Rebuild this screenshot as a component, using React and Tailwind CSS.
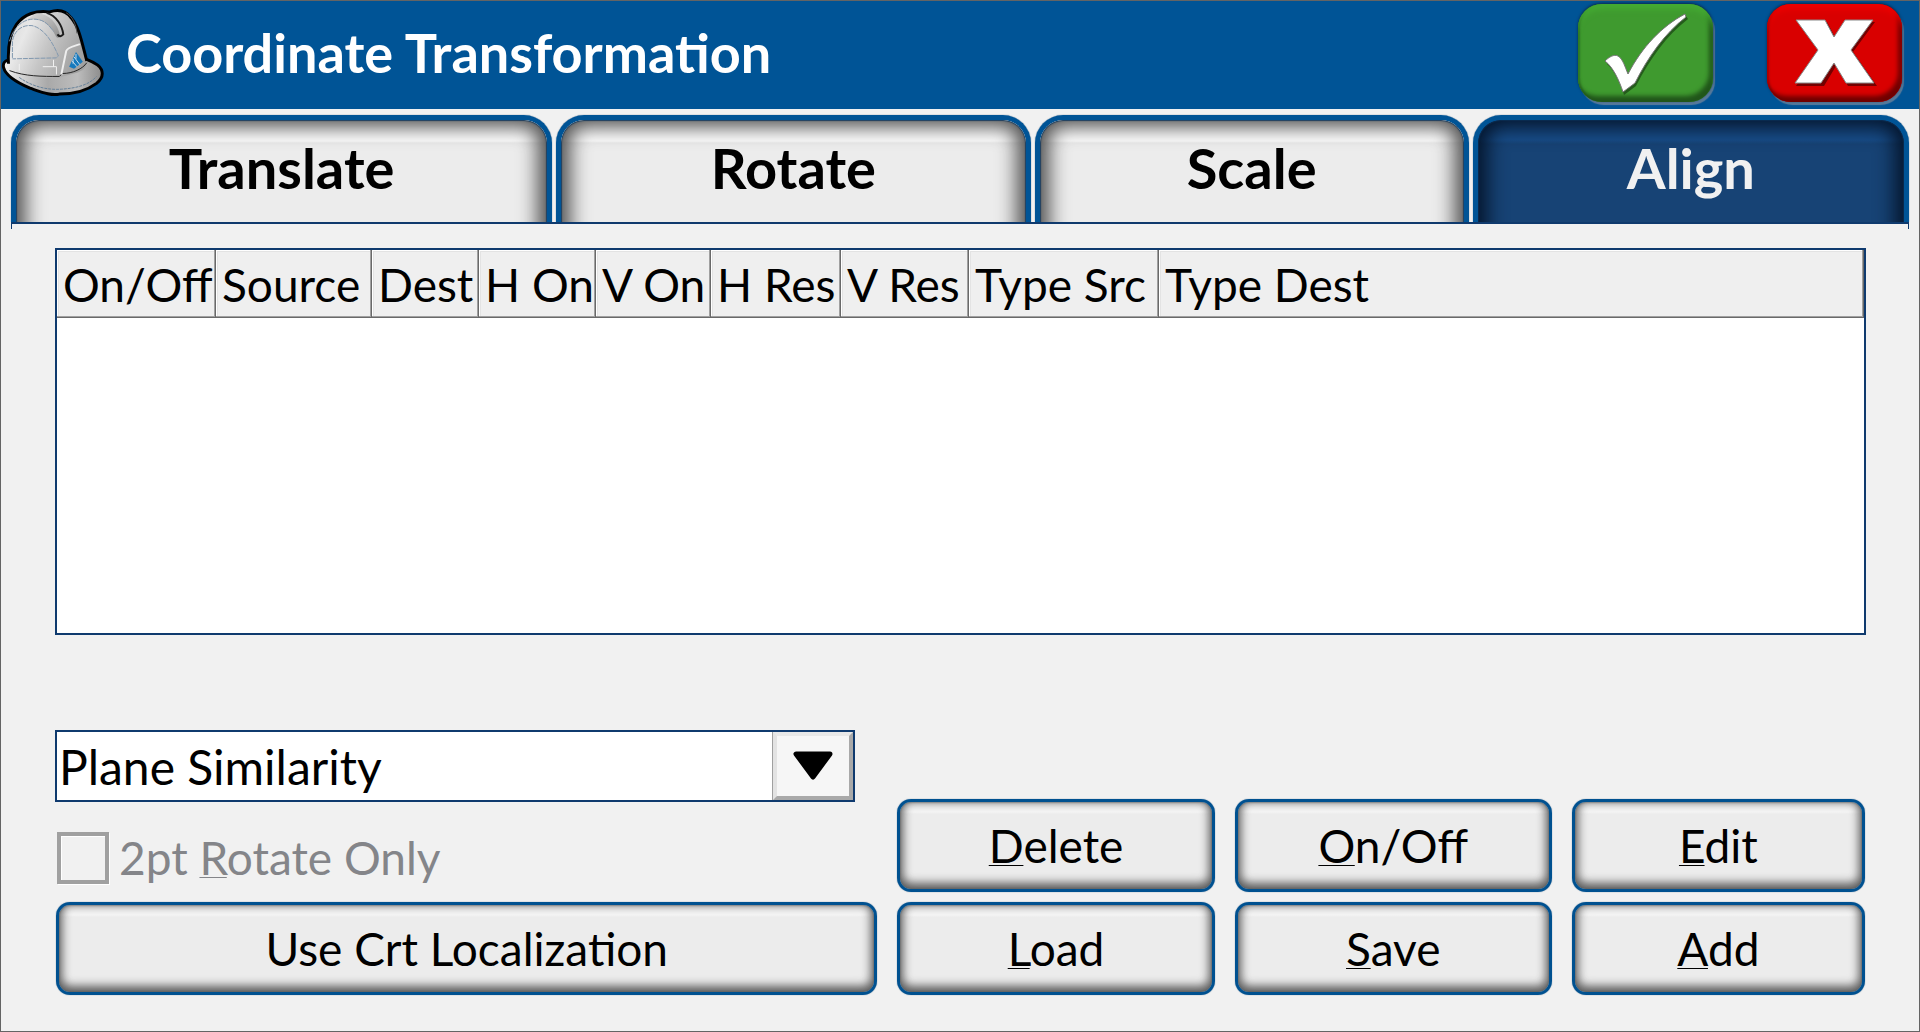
import React, { useState } from 'react';

const tabs = ['Translate', 'Rotate', 'Scale', 'Align'];

const columns = [
  { label: 'On/Off', width: 'w-[159px]' },
  { label: 'Source', width: 'w-[156px]' },
  { label: 'Dest', width: 'w-[107px]' },
  { label: 'H On', width: 'w-[117px]' },
  { label: 'V On', width: 'w-[115px]' },
  { label: 'H Res', width: 'w-[130px]' },
  { label: 'V Res', width: 'w-[128px]' },
  { label: 'Type Src', width: 'w-[190px]' },
  { label: 'Type Dest', width: '' },
];

const actions = ['Delete', 'On/Off', 'Edit', 'Load', 'Save', 'Add'];

const HardHat = () => (
  <svg className="mt-[7px] w-[105px] h-[89px] self-start" viewBox="1 0 106 91" fill="none" aria-hidden="true">
    <defs>
      <linearGradient id="shell" x1="0" y1="0" x2="1" y2="0.4">
        <stop offset="0" stopColor="#d6d6d6" />
        <stop offset="0.3" stopColor="#e8e8e8" />
        <stop offset="0.6" stopColor="#c6c6c6" />
        <stop offset="1" stopColor="#a2a2a2" />
      </linearGradient>
      <linearGradient id="brim" x1="0" y1="0" x2="1" y2="0">
        <stop offset="0" stopColor="#f2f2f2" />
        <stop offset="0.45" stopColor="#a9a9a9" />
        <stop offset="0.75" stopColor="#bdbdbd" />
        <stop offset="1" stopColor="#8b8b8b" />
      </linearGradient>
      <linearGradient id="ridge" x1="0" y1="0" x2="1" y2="1">
        <stop offset="0" stopColor="#dcdcdc" />
        <stop offset="1" stopColor="#8d8d8d" />
      </linearGradient>
    </defs>
    <path d="M8 53C4 54 2 57 3 61C5 69 16 76 30 82C42 86 52 90 60 88C77 88 90 83 98 77C103 73 105 68 103 63C101 58 94 55 89 53Z" fill="url(#brim)" stroke="#000" strokeWidth="3" strokeLinejoin="round" />
    <path d="M9 64C7 46 8 28 16 17C24 6 37 2 50 4C59 1 67 3 72 10C80 19 83 35 88 53C89 60 86 63 79 66C72 68 66 69 61 71C42 72 21 71 9 64Z" fill="url(#shell)" />
    <path d="M8 57C7 40 9 27 16 17C24 6 37 2 50 4C59 1 67 3 72 10C80 19 83 35 88 54" stroke="#000" strokeWidth="3" />
    <path d="M35 6C47 4 58 14 61 29C60 31 57 31 56 28C50 16 41 10 27 12Z" fill="url(#ridge)" />
    <path d="M47 5C57 8 63 18 64 27C62 29 60 30 58 27" stroke="#1c1c1c" strokeWidth="2" />
    <path d="M67 5C73 8 77 16 78 26" stroke="#555" strokeWidth="1" />
    <path d="M9 34C14 17 26 9 39 12C45 13 50 18 54 24M12 51V34C14 22 23 17 32 18C45 21 53 35 59 49L57 51L12 52" stroke="#7f97ae" strokeWidth="1" strokeDasharray="5 1" />
    <path d="M9 64C25 70 42 70 60 70L63 67C74 67 84 62 88 56" stroke="#222" strokeWidth="1" />
    <path d="M19 57V64M54 53V60M43 60H57V68" stroke="#f2f2f2" strokeWidth="1" />
    <path d="M62 68L67 44C68 40 75 39 81 37" stroke="#eee" strokeWidth="2" />
    <path d="M19 71C33 81 49 84 62 83C77 82 90 79 98 70" stroke="#66819a" strokeWidth="1" strokeDasharray="3 1" />
    <path d="M70 60L77 45L84 55L75 62L70 60Z" fill="#1679bd" />
    <path d="M75 50L81 58M73 54L78 60M77 47V52M74 52V57" stroke="#c9dbe8" strokeWidth="1" />
  </svg>
);

// first letter carries the keyboard mnemonic
const Mnemonic = ({ text }) => (
  <span>
    <span className="underline decoration-1 underline-offset-2 [text-decoration-skip-ink:none]">{text[0]}</span>
    {text.slice(1)}
  </span>
);

const PushButton = ({ children }) => (
  <button
    type="button"
    className="h-[93px] rounded-[14px] border-[3px] border-[#005190] bg-[linear-gradient(to_bottom,#f5f5f5_10px,#ececec_12px)] text-[46px] leading-[56px] text-black shadow-[inset_0_-3px_10px_3px_#5c5c5c,inset_0_0_2px_#333,0_0_1px_#40617f]"
  >
    {children}
  </button>
);

const App = () => {
  const [activeTab, setActiveTab] = useState('Align');
  const [method, setMethod] = useState('Plane Similarity');

  return (
    <div className="min-h-screen flex flex-col border border-[#646464] bg-[#f1f1f1] font-['Lato',sans-serif] text-black">
      {/* Title bar */}
      <header className="h-[108px] flex items-center bg-[#005496] pr-[17px]">
        <HardHat />
        <h1 className="flex-1 pb-1 pl-5 text-[54px] leading-[60px] font-bold text-white">Coordinate Transformation</h1>
        <div className="flex gap-[54px] self-start pt-[3px]">
          <button
            type="button"
            aria-label="OK"
            className="w-[135px] h-[98px] rounded-[24px] bg-[#3f9a2f] shadow-[inset_0_8px_6px_-3px_#45ac33,inset_-4px_-6px_4px_#21561a,inset_2px_0_2px_#2c7022,0_-1px_3px_#0a2a4a,2px_3px_1px_#5a7c9c]"
          >
            <svg className="w-full h-full" viewBox="0 0 135 98" aria-hidden="true">
              <path d="M29 60C32 57 37 54 41 55C46 58 48 65 51 72C66 45 86 24 108 12L110 15C88 32 72 55 58 82L46 91C43 80 36 66 29 60Z" fill="#245c1b" />
              <path d="M27 57C31 53 36 50 40 52C45 55 47 63 50 70C64 43 84 22 107 10L108 13C87 29 70 53 57 79L45 88C41 76 35 63 27 57Z" fill="#fff" stroke="#777" strokeWidth="1" />
            </svg>
          </button>
          <button
            type="button"
            aria-label="Cancel"
            className="w-[135px] h-[98px] rounded-[24px] bg-[#d90000] shadow-[inset_0_8px_6px_-3px_#ee0000,inset_-4px_-6px_4px_#700000,inset_2px_0_2px_#a00000,0_-1px_3px_#0a2a4a,2px_3px_1px_#5a7c9c]"
          >
            <svg className="w-full h-full" viewBox="0 0 135 98" aria-hidden="true">
              <path d="M31 18H60L69 35L79 18H108L86 48L110 82H81L69 62L57 82H29L53 48Z" fill="#750000" />
              <path d="M29 16H58L67 33L78 16H106L84 46L107 79H79L67 59L54 79H28L51 46Z" fill="#fff" stroke="#888" strokeWidth="1" />
            </svg>
          </button>
        </div>
      </header>

      {/* Tabs */}
      <div className="px-[10px] pt-[6px]">
        <div role="tablist" className="grid grid-cols-[541fr_474fr_434fr_436fr] gap-1">
          {tabs.map((tab) => (
            <button
              key={tab}
              type="button"
              role="tab"
              aria-selected={activeTab === tab}
              onClick={() => setActiveTab(tab)}
              className={`relative h-[107px] overflow-hidden rounded-t-[28px] border-[5px] border-b-0 border-[#005496] pb-[6px] text-[56px] leading-[60px] font-bold shadow-[0_0_1px_#24425f] before:absolute before:inset-x-0 before:top-0 before:-bottom-10 before:rounded-t-[23px] ${
                activeTab === tab
                  ? 'bg-[linear-gradient(to_bottom,#194e8a_20px,#174375_24px)] text-[#f1f1f1] before:shadow-[inset_0_0_1px_1px_#0a2c50,inset_0_-1px_20px_9px_#04142a]'
                  : 'bg-[linear-gradient(to_bottom,#fff_21px,#ececec_23px)] text-black before:shadow-[inset_0_0_1px_1px_#1d3f60,inset_0_-2px_20px_9px_#4c4c4c]'
              }`}
            >
              {tab}
            </button>
          ))}
        </div>
        <div className="h-[7px] border-x border-t-2 border-[#0f3a6e]" />
      </div>

      <main className="flex-1 flex flex-col pt-[19px] pr-[53px] pb-[36px] pl-[54px]">
        {/* Point pairs */}
        <div className="flex-1 border-2 border-[#0f3a6e] bg-white">
          <table className="w-full table-fixed border-collapse">
            <thead>
              <tr>
                {columns.map((col) => (
                  <th
                    key={col.label}
                    scope="col"
                    className={`h-[68px] ${col.width} bg-[#efefef] pt-[2px] pl-[6px] text-left text-[46px] leading-[56px] font-normal whitespace-nowrap shadow-[inset_-1px_-1px_0_#696969,inset_-2px_-2px_0_#a0a0a0,inset_1px_1px_0_#fff,inset_2px_2px_0_#e3e3e3]`}
                  >
                    {col.label}
                  </th>
                ))}
              </tr>
            </thead>
          </table>
        </div>

        <div className="mt-[95px] grid grid-cols-[821fr_967fr] items-end gap-5 px-px">
          <div className="flex flex-col">
            <div className="relative -ml-px mr-[22px]">
              <select
                aria-label="Transformation method"
                value={method}
                onChange={(e) => setMethod(e.target.value)}
                className="block w-full h-[72px] appearance-none border-2 border-[#0f3a6e] bg-white pt-[2px] pl-[2px] text-[48px] leading-[56px]"
              >
                <option>Plane Similarity</option>
              </select>
              <div className="pointer-events-none absolute top-[2px] right-[2px] bottom-[2px] w-[80px] flex items-center justify-center border-4 border-t-[#e8e8e8] border-l-[#e3e3e3] border-r-[#a9a9a9] border-b-[#a9a9a9] bg-[#f6f6f6] shadow-[-1px_0_0_#a0a0a0]">
                <svg className="w-[42px] h-[30px]" viewBox="0 0 42 30" aria-hidden="true">
                  <path d="M4 3H38L21 26Z" stroke="#000" strokeWidth="5" strokeLinejoin="round" />
                </svg>
              </div>
            </div>
            <label className="mt-[26px] mb-[14px] flex h-[60px] items-center gap-[10px] pl-px text-[46px] leading-[56px] text-[#848589]">
              <input
                type="checkbox"
                disabled
                className="size-[52px] appearance-none border-4 border-[#a0a0a0] bg-[#f1f1f1] shadow-[1px_1px_0_#fff,inset_1px_1px_0_#fff]"
              />
              <span>
                2pt <Mnemonic text="Rotate" /> Only
              </span>
            </label>
            <PushButton>Use Crt Localization</PushButton>
          </div>
          <div className="grid grid-cols-[317fr_317fr_293fr] gap-x-5 gap-y-[10px]">
            {actions.map((name) => (
              <PushButton key={name}>
                <Mnemonic text={name} />
              </PushButton>
            ))}
          </div>
        </div>
      </main>
    </div>
  );
};

export default App;
